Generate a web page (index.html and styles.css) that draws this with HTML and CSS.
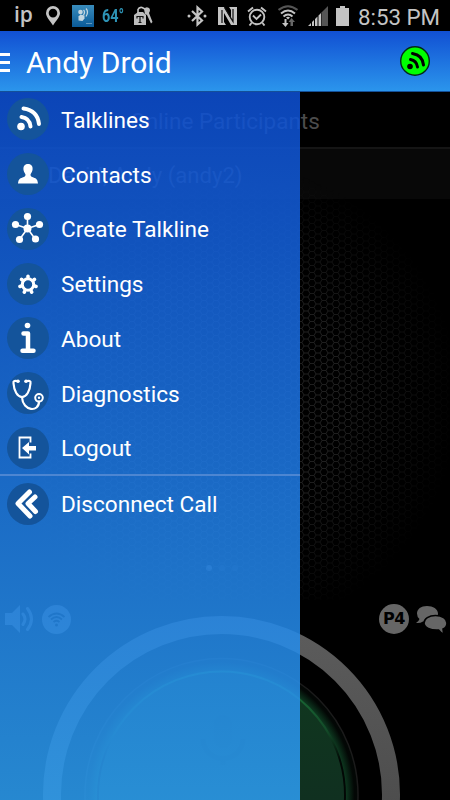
FILE: index.html
```html
<!DOCTYPE html>
<html lang="en">
<head>
  <meta charset="UTF-8" />
  <meta name="viewport" content="width=device-width, initial-scale=1.0" />
  <title>Andy Droid</title>
  <link rel="stylesheet" href="styles.css">
</head>
<body>
  <div class="status-bar">
    <span class="status-ip">ip</span>
    <svg class="st-pin" width="16" height="20" viewBox="0 0 16 20"><path fill="#c4c4c4" fill-rule="evenodd" d="M8 0a7 7 0 0 1 7 7c0 4-3.500 7-7 12.500C4.500 14 1 11 1 7a7 7 0 0 1 7-7zm0 2.800a4.300 4.300 0 1 0 0 8.600 4.300 4.300 0 0 0 0-8.600z"/></svg>
    <svg class="st-app" width="22" height="22" viewBox="0 0 22 22">
      <defs><linearGradient id="appbg" x1="0" y1="0" x2="0" y2="1"><stop offset="0" stop-color="#398cbc"/><stop offset="1" stop-color="#0a5a98"/></linearGradient></defs>
      <rect width="22" height="22" fill="url(#appbg)"/>
      <circle cx="8.500" cy="7" r="2.300" fill="#c4d6e0"/><path fill="#c4d6e0" d="M6.500 15.500v-4l2-2 4 1v3l-2 2.500z"/>
      <path fill="none" stroke="#c4d6e0" stroke-width="1.300" d="M11.500 5q2 2 0 5M14 3.500q3 3.500 0 8"/>
      <path stroke="#6298be" d="M14 18.500h6"/>
    </svg>
    <span class="status-temp">64°</span>
    <svg class="st-tag" width="20" height="20" viewBox="0 0 20 20">
      <path fill="#bdbdbd" d="M1 9l4-3h5l3 3v10H1z"/><path fill="none" stroke="#c4c4c4" stroke-width="1.600" d="M5 7V3.500Q6 1 9 1.500l3 1.500"/>
      <path fill="#bdbdbd" d="M11 3q2-3 5-1 2 2 0 5l3.500 9-1.500 1.500L14 9l-2-1z"/>
      <path fill="none" stroke="#111" stroke-width="1.200" d="M4 12.500v-2h6v2M7 10.500v6M5.500 16.500h3"/>
    </svg>
    <svg class="st-bt" width="20" height="22" viewBox="0 0 20 22"><path fill="none" stroke="#c4c4c4" stroke-width="2.200" d="M5 6l10 9.500-4.500 4v-17l4.500 4L5 16"/><circle cx="2" cy="11" r="1.500" fill="#c4c4c4"/><circle cx="18" cy="11" r="1.500" fill="#c4c4c4"/></svg>
    <svg class="st-nfc" width="19" height="20" viewBox="0 0 19 20"><path fill="#c4c4c4" d="M0 1h6l7 12V4l-2-3h8v18h-6L6 7v9l2 3H0z"/><path stroke="#111" stroke-width="1.200" fill="none" d="M4 4v13M6.500 1.500l8.500 14V3"/></svg>
    <svg class="st-alarm" width="20" height="20" viewBox="0 0 20 20"><g fill="none" stroke="#c4c4c4" stroke-width="1.900"><circle cx="10" cy="11" r="7.300"/><path d="M1 5.500L6 1.500M19 5.500l-5-4M4.500 17L2.500 19.500M15.500 17l2 2.500M6 9.500l3.500 3.500 4.500-4.500"/></g></svg>
    <svg class="st-wifi" width="20" height="22" viewBox="0 0 20 22"><g fill="none" stroke-width="2"><path stroke="#555" d="M0.500 5q9.500-7.500 19 0"/><path stroke="#c4c4c4" d="M3 8.500q7-6 14 0M5.500 11.500q4.500-4 9 0"/></g><path fill="#c4c4c4" d="M8 12.500q2-1.500 4 0l-2 2zM6.500 14h2v4h2l-3 4-3.500-4h2.500z"/><path fill="#666" d="M12.500 21v-4h-2l3-4 3.500 4h-2v4z"/></svg>
    <svg class="st-signal" width="21" height="20" viewBox="0 0 21 20"><path fill="#555" d="M13.500 6.500L20 0v20h-6.500z"/><path fill="#c4c4c4" d="M0 20l3-3v3zM4 16l2-2v6H4zM7 13l2.500-2.500V20H7zM10.500 9.500L13 7v13h-2.500z"/></svg>
    <svg class="st-battery" width="13" height="20" viewBox="0 0 13 20"><path fill="#c4c4c4" d="M4 0h5v2h4v18H0V2h4z"/></svg>
    <span class="status-time">8:53 PM</span>
  </div>

  <header class="header">
    <div class="menu-lines"><i></i><i></i><i></i></div>
    <h1>Andy Droid</h1>
    <svg width="30" height="30" viewBox="0 0 30 30"><circle cx="15" cy="15" r="14.300" fill="#0f0" stroke="#062a18" stroke-width="1.400"/><circle cx="10" cy="20.500" r="2.800"/><path fill="none" stroke="#000" stroke-width="3" stroke-linecap="round" d="M10.500 13.500q6 1 7 7.500M12.500 7.500q10 1.500 11 11.500"/></svg>
  </header>

  <main class="screen">
    <svg class="mesh" width="450" height="457" viewBox="0 0 450 457">
      <defs>
        <pattern id="hex" width="12" height="7" patternUnits="userSpaceOnUse"><path fill="none" stroke="#222" stroke-width="0.900" d="M0 3.500h2l2-3.500h4l2 3.500h2M2 3.500L4 7h4l2-3.500"/></pattern>
        <radialGradient id="fade" cx="225" cy="255" r="235" gradientUnits="userSpaceOnUse"><stop offset="0" stop-color="#fff"/><stop offset="0.500" stop-color="#fff"/><stop offset="1" stop-color="#000"/></radialGradient>
        <mask id="meshmask"><rect width="450" height="457" fill="url(#fade)"/></mask>
      </defs>
      <rect width="450" height="457" fill="url(#hex)" mask="url(#meshmask)"/>
    </svg>
    <h2 class="participants">Online Participants</h2>
    <p class="participant">David, Andy (andy2)</p>
    <div class="pager"><i class="on"></i><i></i><i></i></div>
    <div class="tools">
      <svg width="30" height="30" viewBox="0 0 30 30"><path fill="#666" d="M0 9h7l8-8v28l-8-8H0z"/><path fill="none" stroke="#666" stroke-width="3" stroke-linecap="round" d="M18 10q4 5 0 10.500M22.500 4.500q8 10.500 0 21"/></svg>
      <svg width="29" height="29" viewBox="0 0 29 29"><circle cx="14.500" cy="14.500" r="14.500" fill="#666"/><circle cx="14.500" cy="20" r="1.500"/><path fill="none" stroke="#000" stroke-width="1.700" d="M6.500 12q8-7 16 0M9 14.500q5.500-5 11 0M11.500 17q3-2.500 6 0"/></svg>
      <span class="badge">P4</span>
      <svg width="31" height="29" viewBox="0 0 31 29"><path fill="#666" d="M11 1C17 1 22 4 22 8.500S17 17 11 17l-4-.5Q4 18.500 0 18q3-2 3.500-4Q1 12 1 8.500C1 4 5 1 11 1z"/><path fill="#666" stroke="#000" stroke-width="1.600" d="M19.500 10.500c6.500 0 11.500 3 11.500 7.500 0 3-1.500 5-4 6q0 3 2 5.500-4.500-1-6.500-4.500c-8 .5-14.500-2.500-14.500-7s5-7.500 11.500-7.500z"/></svg>
    </div>
    <svg class="talk-button" width="450" height="185" viewBox="0 615 450 185">
      <defs>
        <linearGradient id="ring" x1="0" y1="0" x2="0" y2="1"><stop offset="0" stop-color="#5c5c5c"/><stop offset="1" stop-color="#404040"/></linearGradient>
        <radialGradient id="glow" cx="221.500" cy="795" r="137" gradientUnits="userSpaceOnUse"><stop offset="0.900" stop-color="#0e3d22"/><stop offset="0.970" stop-color="#030705"/></radialGradient>
        <linearGradient id="disc" x1="0" y1="671" x2="0" y2="800" gradientUnits="userSpaceOnUse"><stop offset="0" stop-color="#10381f"/><stop offset="1" stop-color="#103020"/></linearGradient>
        <linearGradient id="edge" x1="0" y1="671" x2="0" y2="790" gradientUnits="userSpaceOnUse"><stop offset="0" stop-color="#1c7a3c"/><stop offset="0.500" stop-color="#134a28"/><stop offset="0.750" stop-color="#020805"/></linearGradient>
      </defs>
      <circle cx="221.500" cy="794.500" r="169.500" fill="none" stroke="url(#ring)" stroke-width="18"/>
      <circle cx="221.500" cy="795" r="136.500" fill="url(#glow)" stroke="#1b1b1b" stroke-width="1.500"/>
      <circle cx="221.500" cy="795" r="123.500" fill="url(#disc)" stroke="url(#edge)" stroke-width="2"/>
      <path fill="none" stroke="#0b2817" stroke-width="5" d="M203 739c1 26 39 26 40 0M223 758v7"/><rect x="214" y="715" width="18" height="33" rx="9" fill="#0e2f1b"/>
    </svg>

    <nav class="drawer">
      <a class="item">
        <svg class="icon" viewBox="0 0 42 42"><circle cx="14" cy="28.500" r="3.800" fill="#fff"/><path fill="none" stroke="#fff" stroke-width="4" stroke-linecap="round" d="M14.500 19q8 1 9 9.500M16.500 10.500q14 2 15.500 15.500"/></svg>
        <span>Talklines</span>
      </a>
      <a class="item">
        <svg class="icon" viewBox="0 0 42 42"><path fill="#fff" d="M21 11c3.500 0 5 2.500 4.500 6-.3 2-1.500 3-2 4.500 0 2 1 2.500 3 3 3 1 4 2 4.500 6H11c.5-4 1.500-5 4.500-6 2-.5 3-1 3-3-.5-1.500-1.700-2.500-2-4.500-.5-3.500 1-6 4.500-6z"/></svg>
        <span>Contacts</span>
      </a>
      <a class="item">
        <svg class="icon" viewBox="0 0 42 42"><path stroke="#fff" stroke-width="1.600" d="M20.500 20.500v-12M20.500 20.500l-12-4M20.500 20.500l12-4M20.500 20.500l-8 11M20.500 20.500l8 11"/><g fill="#fff"><circle cx="20.500" cy="20.500" r="4"/><circle cx="20.500" cy="8.500" r="3.600"/><circle cx="8.500" cy="16.500" r="3.600"/><circle cx="32.500" cy="16.500" r="3.600"/><circle cx="12.500" cy="31.500" r="3.600"/><circle cx="28.500" cy="31" r="3.600"/></g></svg>
        <span>Create Talkline</span>
      </a>
      <a class="item">
        <svg class="icon" viewBox="0 0 42 42"><circle cx="21" cy="21.500" r="5.700" fill="none" stroke="#fff" stroke-width="3"/><path stroke="#fff" stroke-width="3.600" stroke-linecap="round" d="M21 14v-.8M26.800 16.900l.7-.6M28.300 23.200l.8.200M24.300 28.300l.4.800M17.700 28.300l-.4.800M13.700 23.200l-.8.200M15.200 16.900l-.7-.6"/></svg>
        <span>Settings</span>
      </a>
      <a class="item">
        <svg class="icon" viewBox="0 0 42 42"><circle cx="20.500" cy="8.500" r="2.800" fill="#fff"/><path fill="none" stroke="#fff" stroke-width="4.500" stroke-linecap="round" stroke-linejoin="round" d="M16.500 16.500h4.500v16M15.500 33.800h11"/></svg>
        <span>About</span>
      </a>
      <a class="item">
        <svg class="icon" viewBox="0 0 42 42"><path fill="none" stroke="#fff" stroke-width="2.200" stroke-linecap="round" d="M11 9.200c-3-1-5 0-4.500 2 .5 8 4 13.500 8.500 14 4.500-.5 8-6 8.500-14 .5-2-1.500-3-4.500-2M15 25.500c1 14 17 15 17 4"/><circle cx="11" cy="9.200" r="1.800" fill="#fff"/><circle cx="19" cy="9.200" r="1.800" fill="#fff"/><circle cx="32" cy="25.800" r="3.800" fill="none" stroke="#fff" stroke-width="2"/><circle cx="32" cy="25.800" r="1.200" fill="#fff"/></svg>
        <span>Diagnostics</span>
      </a>
      <a class="item">
        <svg class="icon" viewBox="0 0 42 42"><path fill="none" stroke="#fff" stroke-width="1.800" d="M23.500 15.500v-5h-11V30.500h11v-4"/><path fill="#fff" d="M15 21l7-6v4h7v4.500h-7v4z"/></svg>
        <span>Logout</span>
      </a>
      <hr class="divider">
      <a class="item">
        <svg class="icon" viewBox="0 0 42 42"><path fill="none" stroke="#fff" stroke-width="5" stroke-linecap="round" stroke-linejoin="round" d="M22.500 9L11 20.500l12 12.500M28 14l-7 6.500 7.500 8"/></svg>
        <span>Disconnect Call</span>
      </a>
    </nav>
  </main>
</body>
</html>
```
FILE: styles.css
```css
* {
  box-sizing: border-box;
}
body {
  margin: 0;
  width: 450px;
  height: 800px;
  overflow: hidden;
  background: #000;
  color: #fff;
  font-family: Roboto, "Liberation Sans", sans-serif;
}
svg {
  display: block;
  flex: none;
}
.status-bar {
  display: flex;
  align-items: center;
  height: 31px;
  padding-left: 14px;
  color: #c4c4c4;
}
.status-ip {
  width: 31px;
  font: 600 21px/28px "Open Sans", sans-serif;
  margin-top: -4px;
}
.st-app {
  margin-left: 11px;
}
.status-temp {
  width: 31px;
  margin-left: 8px;
  color: #2d93b5;
  font-size: 18px;
  font-weight: bold;
  transform: scaleX(0.8);
  transform-origin: left;
}
.st-bt {
  margin-left: 34px;
}
.st-nfc {
  margin-left: 11px;
}
.st-alarm {
  margin-left: 10px;
}
.st-wifi {
  margin-left: 11px;
}
.st-signal {
  margin-left: 10px;
}
.st-battery {
  margin-left: 7px;
}
.status-time {
  margin: 2px 0 0 9px;
  font-size: 22.3px;
  white-space: nowrap;
}
.header {
  display: flex;
  align-items: center;
  height: 61px;
  padding-right: 20px;
  background: linear-gradient(#1150d3, #2b95ec);
  border-bottom: 1px solid #145099;
}
.header h1 {
  flex: 1;
  margin: 2px 0 0 16px;
  font-size: 30px;
  font-weight: normal;
}
.menu-lines {
  display: flex;
  flex-direction: column;
  gap: 5px;
  width: 10px;
  margin-top: 2px;
}
.menu-lines i {
  height: 3px;
  background: #fff;
}
.screen {
  position: relative;
  height: 708px;
  overflow: hidden;
}
/* honeycomb behind the participant list */
.mesh {
  position: absolute;
  top: 51px;
  left: 0;
}
.participants {
  height: 57px;
  margin: 0;
  border-bottom: 2px solid #151515;
  color: #4c4c4c;
  font-size: 22.5px;
  font-weight: normal;
  line-height: 58px;
  text-align: center;
}
.participant {
  height: 50px;
  margin: 0;
  padding-left: 48px;
  background: rgba(255, 255, 255, 0.03);
  color: #4c4c4c;
  font-size: 22.1px;
  line-height: 52px;
}
.pager {
  display: flex;
  justify-content: center;
  gap: 7px;
  height: 405px;
  padding: 366px 7px 0 0;
}
.pager i {
  width: 6px;
  height: 6px;
  border-radius: 50%;
  background: #181818;
}
.pager .on {
  background: #555;
}
.tools {
  display: flex;
  align-items: center;
  height: 30px;
  padding: 0 3px 0 5px;
}
.tools svg:nth-child(2) {
  margin-left: 7px;
}
.badge {
  width: 30px;
  height: 30px;
  margin: 0 7px 0 auto;
  border-radius: 50%;
  background: #666;
  color: #000;
  font: bold 16px/30px "DejaVu Sans", sans-serif;
  letter-spacing: -0.5px;
  text-align: center;
}
.talk-button {
  margin-top: -19px;
}
.drawer {
  position: absolute;
  top: 0;
  left: 0;
  width: 300px;
  height: 708px;
  background: linear-gradient(rgba(13, 79, 211, 0.87), rgba(44, 156, 239, 0.87));
}
.item {
  display: flex;
  align-items: center;
  height: 54.75px;
  padding-left: 7px;
  font-size: 22.6px;
}
.item span {
  padding-top: 2px;
}
.icon {
  width: 42px;
  height: 42px;
  margin-right: 12px;
  border-radius: 50%;
  background: #14549b;
}
.divider {
  height: 2px;
  margin: -1px 0 0;
  border: 0;
  background: #4d86d2;
}
```
